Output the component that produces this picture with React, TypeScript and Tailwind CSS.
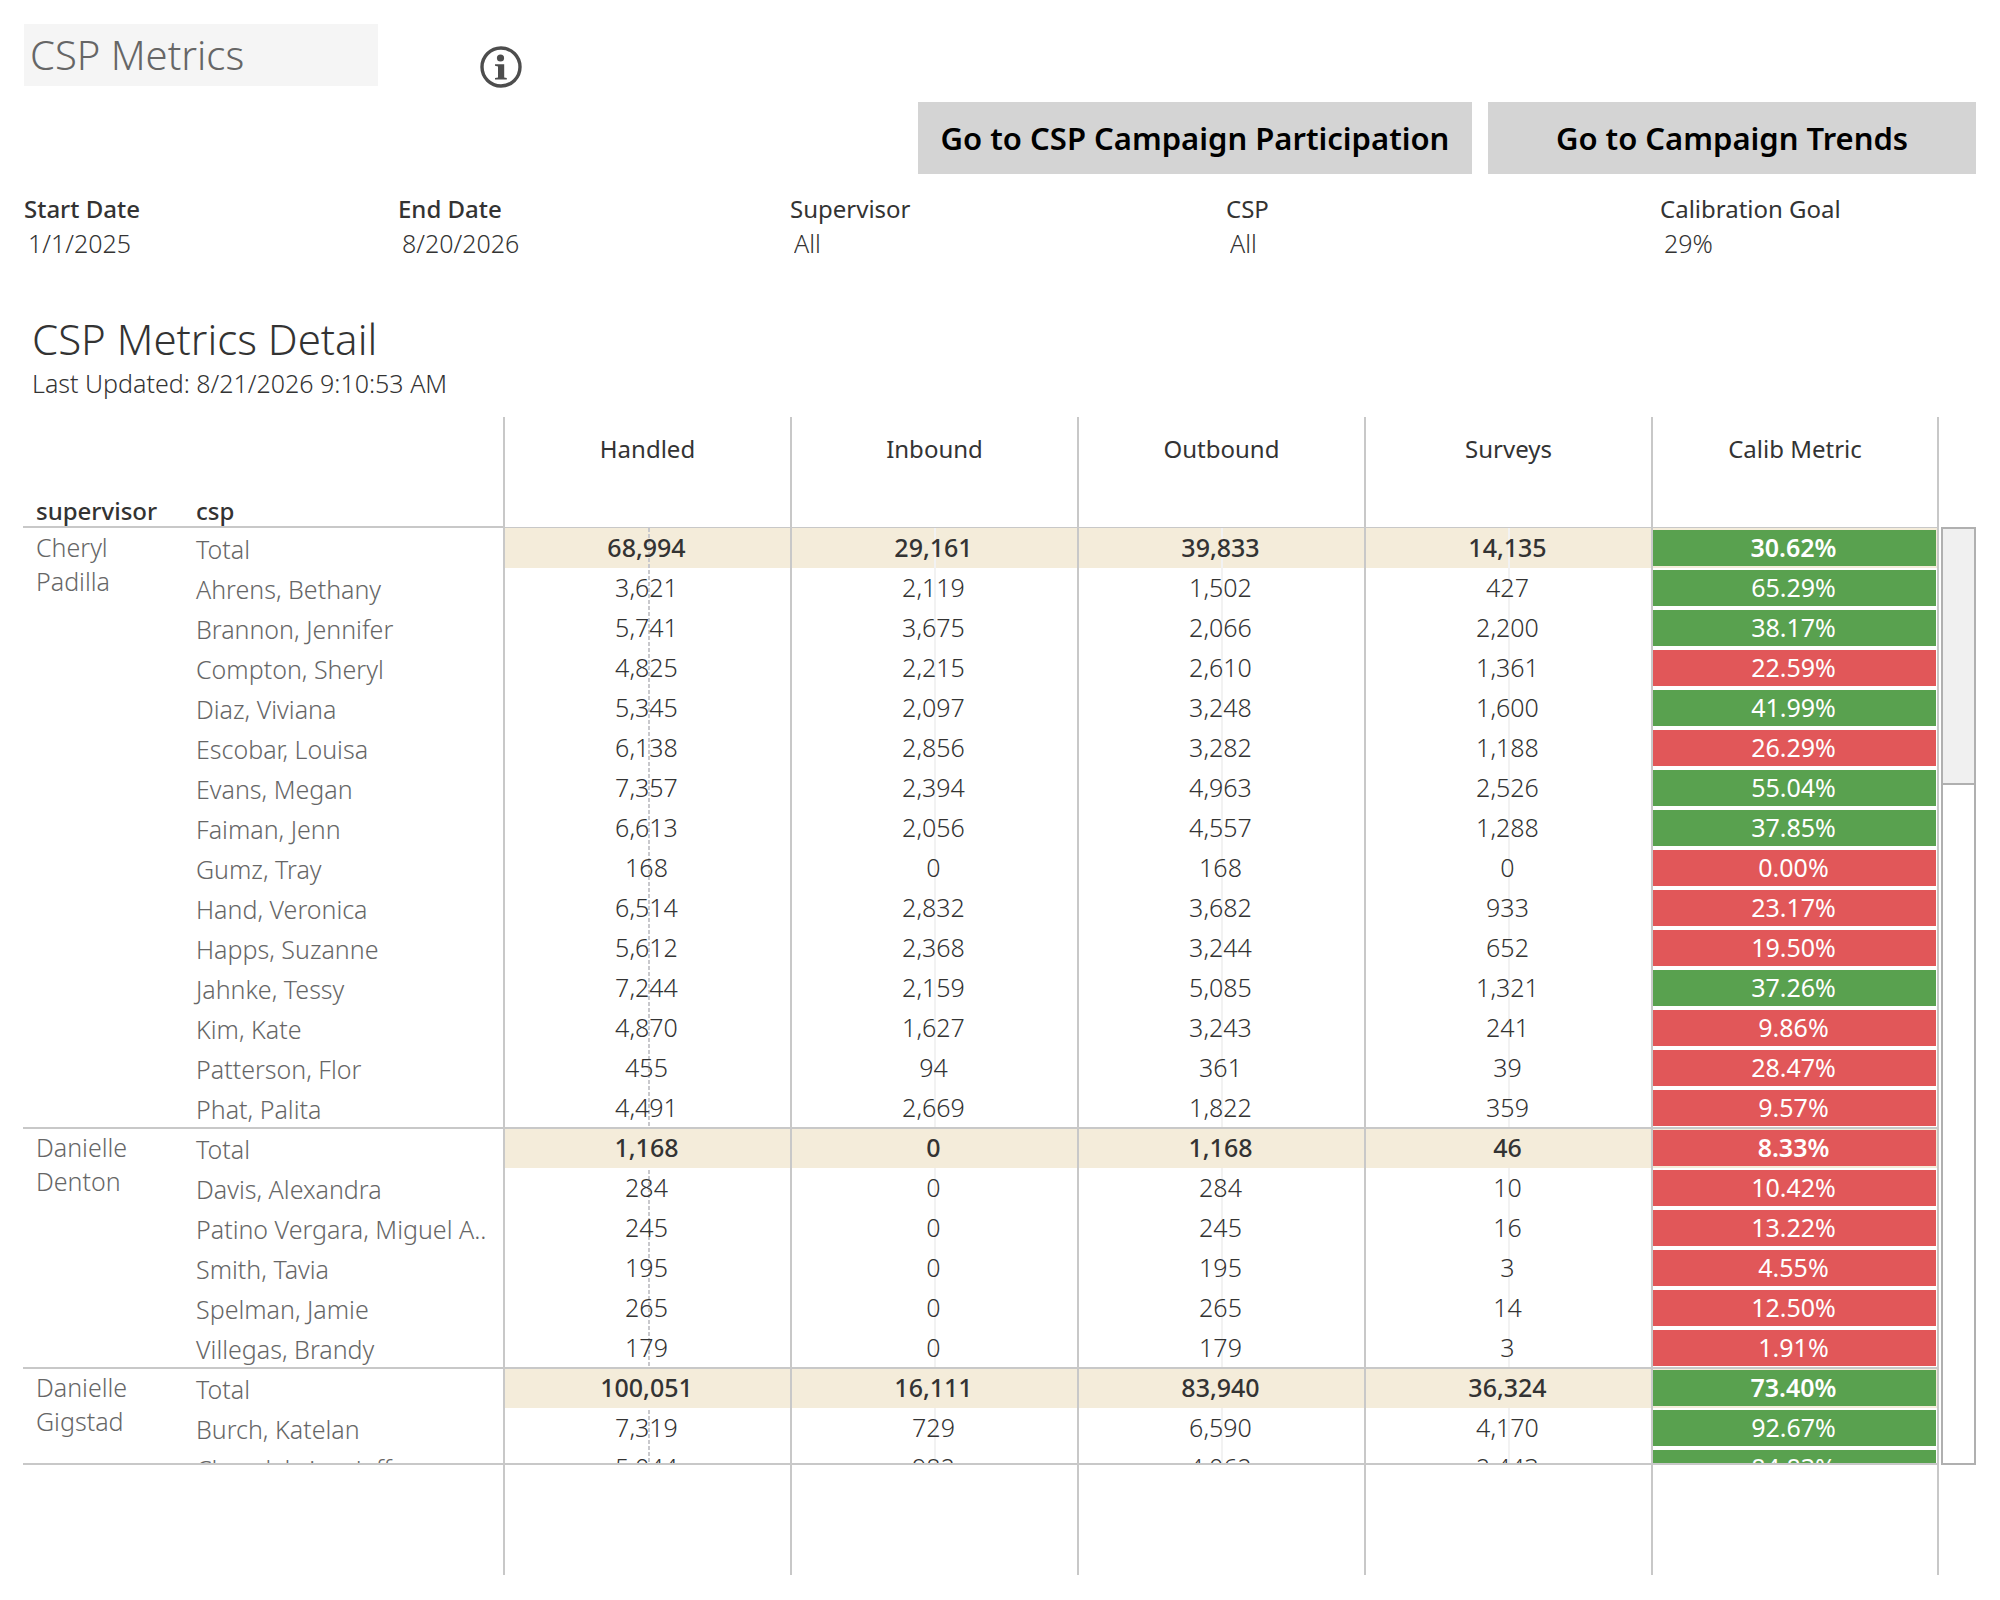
import React from "react";

type Row = [string, string, string, string, string, string];
type Group = { supervisor: string; rows: Row[] };

const GOAL = 29;

const groups: Group[] = [
  {
    supervisor: "Cheryl Padilla",
    rows: [
      ["Total", "68,994", "29,161", "39,833", "14,135", "30.62%"],
      ["Ahrens, Bethany", "3,621", "2,119", "1,502", "427", "65.29%"],
      ["Brannon, Jennifer", "5,741", "3,675", "2,066", "2,200", "38.17%"],
      ["Compton, Sheryl", "4,825", "2,215", "2,610", "1,361", "22.59%"],
      ["Diaz, Viviana", "5,345", "2,097", "3,248", "1,600", "41.99%"],
      ["Escobar, Louisa", "6,138", "2,856", "3,282", "1,188", "26.29%"],
      ["Evans, Megan", "7,357", "2,394", "4,963", "2,526", "55.04%"],
      ["Faiman, Jenn", "6,613", "2,056", "4,557", "1,288", "37.85%"],
      ["Gumz, Tray", "168", "0", "168", "0", "0.00%"],
      ["Hand, Veronica", "6,514", "2,832", "3,682", "933", "23.17%"],
      ["Happs, Suzanne", "5,612", "2,368", "3,244", "652", "19.50%"],
      ["Jahnke, Tessy", "7,244", "2,159", "5,085", "1,321", "37.26%"],
      ["Kim, Kate", "4,870", "1,627", "3,243", "241", "9.86%"],
      ["Patterson, Flor", "455", "94", "361", "39", "28.47%"],
      ["Phat, Palita", "4,491", "2,669", "1,822", "359", "9.57%"],
    ],
  },
  {
    supervisor: "Danielle Denton",
    rows: [
      ["Total", "1,168", "0", "1,168", "46", "8.33%"],
      ["Davis, Alexandra", "284", "0", "284", "10", "10.42%"],
      ["Patino Vergara, Miguel A..", "245", "0", "245", "16", "13.22%"],
      ["Smith, Tavia", "195", "0", "195", "3", "4.55%"],
      ["Spelman, Jamie", "265", "0", "265", "14", "12.50%"],
      ["Villegas, Brandy", "179", "0", "179", "3", "1.91%"],
    ],
  },
  {
    supervisor: "Danielle Gigstad",
    rows: [
      ["Total", "100,051", "16,111", "83,940", "36,324", "73.40%"],
      ["Burch, Katelan", "7,319", "729", "6,590", "4,170", "92.67%"],
      ["Choudahrian, Jeff", "5,044", "982", "4,062", "2,443", "84.83%"],
    ],
  },
];

const measures = ["Handled", "Inbound", "Outbound", "Surveys", "Calib Metric"];

function InfoIcon() {
  return (
    <svg viewBox="0 0 42 42" className="size-[42px]" aria-hidden="true">
      <circle cx="21" cy="21" r="19" fill="none" stroke="#4d4d4d" strokeWidth="3.4" />
      <circle cx="20.5" cy="12" r="3.6" fill="#4d4d4d" />
      <path d="M15 18.2h9.2v13.2l2.6.6v1.6H15V32l3-.6V20.4l-3-.6z" fill="#4d4d4d" />
    </svg>
  );
}

const labelClass = "block text-[24px] leading-[34px] text-[#333333]";
const valueClass =
  "block w-full appearance-none border-0 bg-transparent p-0 pl-1 text-[25px] leading-[34px] font-light text-[#333333] outline-none";

function TextFilter({ id, label, value, strong }: { id: string; label: string; value: string; strong?: boolean }) {
  return (
    <div className="min-w-0">
      <label htmlFor={id} className={`${labelClass} ${strong ? "font-medium" : ""}`}>{label}</label>
      <input id={id} type="text" defaultValue={value} className={valueClass} />
    </div>
  );
}

function SelectFilter({ id, label, value }: { id: string; label: string; value: string }) {
  return (
    <div className="min-w-0">
      <label htmlFor={id} className={labelClass}>{label}</label>
      <select id={id} className={valueClass}>
        <option>{value}</option>
      </select>
    </div>
  );
}

function MeasureCell({ text, total, line }: { text: string; total: boolean; line?: "dashed" | "solid" }) {
  return (
    <td className={`relative border-l-2 border-[#c8c8c8] p-0 pb-[2px] text-center leading-9 ${total ? "bg-[#f4ecda] font-medium" : "font-light"}`}>
      {line === "dashed" && (
        <i className="absolute top-0 left-1/2 h-[936px] w-[2px] bg-[repeating-linear-gradient(to_bottom,#c8c8cc_0_4px,transparent_4px_6px)]" />
      )}
      {line === "solid" && <i className="absolute top-0 left-1/2 -ml-px h-[936px] w-[2px] bg-[#f2f2f2]" />}
      <span className="relative z-10 pr-[2px]">{text}</span>
    </td>
  );
}

function CalibCell({ text, total }: { text: string; total: boolean }) {
  const color = parseFloat(text) >= GOAL ? "bg-[#59a14f]" : "bg-[#e15759]";
  return (
    <td className={`border-x-2 border-[#c8c8c8] py-[2px] pr-[1px] pl-0 text-center text-white ${total ? "bg-[#f4ecda] font-semibold" : "font-normal"}`}>
      <div className={`${color} h-9 pr-[2px] leading-[34px]`}>{text}</div>
    </td>
  );
}

function MetricsTable() {
  return (
    <table className="w-full table-fixed border-separate border-spacing-0 text-[25px] text-[#333333]">
      <colgroup>
        <col className="w-[160px]" />
        <col className="w-[320px]" />
        <col /><col /><col /><col />
        <col className="w-[288px]" />
      </colgroup>
      <thead className="text-[24px]">
        <tr className="h-[111px]">
          <th className="border-b-2 border-[#c8c8c8] p-0 pl-[13px] text-left align-bottom leading-[30px] font-medium">supervisor</th>
          <th className="border-b-2 border-[#c8c8c8] p-0 pl-[13px] text-left align-bottom leading-[30px] font-medium">csp</th>
          {measures.map((m, i) => (
            <th
              key={m}
              className={`border-b border-l-2 border-[#c8c8c8] p-0 pt-[15px] text-center align-top leading-[34px] font-normal ${i === 4 ? "border-r-2" : ""}`}
            >
              {m}
            </th>
          ))}
        </tr>
      </thead>
      {groups.map((g, gi) => (
        <tbody key={g.supervisor} className={gi > 0 ? "[&>tr:first-child>*]:shadow-[inset_0_1px_#c8c8c8,0_-1px_#c8c8c8]" : ""}>
          {g.rows.map((r, ri) => (
            <tr key={r[0]} className="h-10">
              {ri === 0 && (
                <th rowSpan={g.rows.length} className="p-0 pt-[2px] pl-[13px] text-left align-top leading-[34px] font-light text-[#666666]">
                  <span className="block w-[120px]">{g.supervisor}</span>
                </th>
              )}
              <th className="p-0 pt-[2px] pl-[13px] text-left leading-9 font-light whitespace-nowrap text-[#666666]">{r[0]}</th>
              {[1, 2, 3, 4].map((c) => (
                <MeasureCell
                  key={c}
                  text={r[c]}
                  total={ri === 0}
                  line={gi === 0 && ri === 0 ? (c === 1 ? "dashed" : "solid") : undefined}
                />
              ))}
              <CalibCell text={r[5]} total={ri === 0} />
            </tr>
          ))}
        </tbody>
      ))}
    </table>
  );
}

export default function App() {
  return (
    <main className="min-h-screen bg-white pt-6 pr-6 pl-[23px] font-['Noto_Sans',sans-serif]">
      <header className="pl-px">
        <div className="flex items-start gap-[102px]">
          <h1 className="w-[354px] bg-[#f5f5f5] pl-[6px] text-[40px] leading-[62px] font-light text-[#666666]">CSP Metrics</h1>
          <button type="button" aria-label="About these metrics" className="mt-[22px]">
            <InfoIcon />
          </button>
        </div>
        <nav className="mt-[14px] flex justify-end gap-4 text-[31px] font-semibold text-black">
          <button type="button" className="h-[72px] w-[554px] bg-[#d4d4d4]">Go to CSP Campaign Participation</button>
          <button type="button" className="h-[72px] w-[488px] bg-[#d4d4d4]">Go to Campaign Trends</button>
        </nav>
      </header>

      <form className="mt-[18px] grid grid-cols-[374fr_392fr_436fr_434fr_316fr] pl-px">
        <TextFilter id="start" label="Start Date" value="1/1/2025" strong />
        <TextFilter id="end" label="End Date" value="8/20/2026" strong />
        <SelectFilter id="supervisor" label="Supervisor" value="All" />
        <SelectFilter id="csp" label="CSP" value="All" />
        <TextFilter id="goal" label="Calibration Goal" value="29%" />
      </form>

      <section className="mt-[51px] text-[#333333]">
        <h2 className="pl-[9px] text-[42px] leading-[56px] font-light">CSP Metrics Detail</h2>
        <p className="pl-[9px] text-[25px] leading-8 font-light">Last Updated: 8/21/2026 9:10:53 AM</p>

        <div className="mt-[18px] flex items-start gap-[2px]">
          <div className="min-w-0 flex-1">
            <div className="h-[1048px] overflow-hidden border-b-2 border-[#c8c8c8]">
              <MetricsTable />
            </div>
            <div className="grid h-[110px] grid-cols-[repeat(4,1fr)_286px] border-r-2 border-[#c8c8c8] pl-[480px]">
              {measures.map((m) => (
                <div key={m} className="border-l-2 border-[#c8c8c8]" />
              ))}
            </div>
          </div>
          <div className="mt-[110px] h-[938px] w-[35px] border-2 border-[#b0b0b0]">
            <div className="h-[256px] border-b-2 border-[#b0b0b0] bg-[#f0f0f0]" />
          </div>
        </div>
      </section>
    </main>
  );
}
